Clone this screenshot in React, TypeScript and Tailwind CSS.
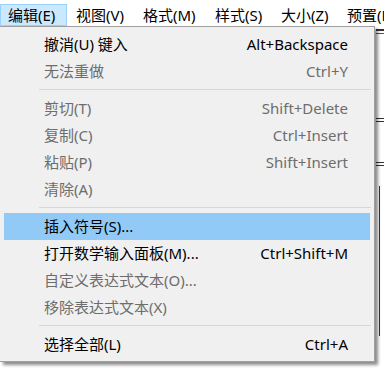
import React from "react";

type Item = {
  label: string;
  shortcut?: string;
  disabled?: boolean;
  active?: boolean;
};

// sections of the edit menu, separators go between them
const sections: Item[][] = [
  [
    { label: "撤消(U) 键入", shortcut: "Alt+Backspace" },
    { label: "无法重做", shortcut: "Ctrl+Y", disabled: true },
  ],
  [
    { label: "剪切(T)", shortcut: "Shift+Delete", disabled: true },
    { label: "复制(C)", shortcut: "Ctrl+Insert", disabled: true },
    { label: "粘贴(P)", shortcut: "Shift+Insert", disabled: true },
    { label: "清除(A)", disabled: true },
  ],
  [
    { label: "插入符号(S)...", active: true },
    { label: "打开数学输入面板(M)...", shortcut: "Ctrl+Shift+M" },
    { label: "自定义表达式文本(O)...", disabled: true },
    { label: "移除表达式文本(X)", disabled: true },
  ],
  [{ label: "选择全部(L)", shortcut: "Ctrl+A" }],
];

// top menu bar, widths read off the screenshot
const menuBar = [
  { label: "编辑(E)", w: "w-[67px] pl-[7px]" },
  { label: "视图(V)", w: "w-[67px] pl-[8px]" },
  { label: "格式(M)", w: "w-[72px] pl-[8px]" },
  { label: "样式(S)", w: "w-[66px] pl-[8px]" },
  { label: "大小(Z)", w: "w-[66px] pl-[8px]" },
  { label: "预置(P)", w: "w-[66px] pl-[8px]" },
];

const MenuRow: React.FC<{ item: Item }> = ({ item }) => (
  <div
    className={`mx-[4px] flex h-[27px] items-center pl-[40px] pr-[22px] ${
      item.active ? "bg-[#91c9f7]" : ""
    } ${item.disabled ? "text-[#6d6d6d]" : "text-black"}`}
  >
    <span className="flex-1 whitespace-nowrap">{item.label}</span>
    {item.shortcut && <span className="whitespace-nowrap">{item.shortcut}</span>}
  </div>
);

export default function App() {
  return (
    <div
      className="relative h-[369px] w-[384px] overflow-hidden bg-white text-[15px] leading-none"
      style={{ fontFamily: '"Noto Sans", "Noto Sans CJK SC", sans-serif' }}
    >
      {/* menu bar */}
      <div className="flex h-[26px] items-end bg-white">
        {menuBar.map((m, i) => (
          <div
            key={m.label}
            className={`flex h-[22px] shrink-0 items-center whitespace-nowrap border ${m.w} ${
              i === 0 ? "border-[#99d1ff] bg-[#cce8ff]" : "border-transparent"
            }`}
          >
            {m.label}
          </div>
        ))}
      </div>

      {/* window content peeking out on the right */}
      <div className="absolute right-0 top-[26px] h-[343px] w-[8px]">
        <div className="mt-[3px] h-[2px] bg-[#333]" />
        <div className="mt-[2px] h-[1px] bg-[#555]" />
        <div className="mt-[84px] h-[1px] bg-[#333]" />
        <div className="mt-[2px] h-[1px] bg-[#333]" />
        <div className="mt-[40px] h-[1px] bg-[#333]" />
        <div className="mt-[2px] h-[1px] bg-[#333]" />
        <div className="ml-[3px] mt-[20px] h-[150px] border-l border-[#333]" />
      </div>

      {/* dropdown */}
      <div className="absolute left-0 top-[26px] w-[375px] border border-l-0 border-[#a0a0a0] bg-[#f0f0f0] pb-[3px] pt-[4px] shadow-[3px_3px_3px_rgba(0,0,0,0.45)]">
        {sections.map((sec, si) => (
          <div key={si}>
            {si > 0 && <div className="mb-[5px] ml-[39px] mr-[3px] mt-[4px] h-[1px] bg-[#d7d7d7]" />}
            {sec.map((it) => (
              <MenuRow key={it.label} item={it} />
            ))}
          </div>
        ))}
      </div>
    </div>
  );
}
